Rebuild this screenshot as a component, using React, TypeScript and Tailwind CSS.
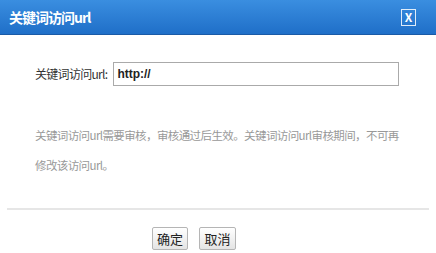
const cjk = { fontFamily: '"Noto Sans CJK SC", "Liberation Sans", sans-serif' };

export default function App() {
  return (
    <div className="w-[436px] h-[253px] bg-white overflow-hidden" style={cjk}>
      <div className="h-[35px] flex items-center justify-between pl-[9px] pr-[20px] bg-gradient-to-b from-[#3a8ee0] to-[#1f6fc8] border-b border-[#1a5aa6]">
        <span className="text-white text-[14px] font-bold tracking-[-1px]">关键词访问url</span>
        <span className="w-[15px] h-[17px] border-[1.5px] border-white/85 flex items-center justify-center text-white text-[12px] font-bold leading-none">X</span>
      </div>
      <div className="flex items-center pl-[35px] pt-[27px]">
        <span className="text-[12px] text-[#333] tracking-[-0.7px] pr-[1px]">关键词访问url:</span>
        <div className="ml-[5px] w-[286px] h-[24px] border border-[#aaa] flex items-center px-[3px] text-[12px] font-bold text-[#222]" style={{ fontFamily: '"Liberation Sans", sans-serif' }}>
          http://
        </div>
      </div>
      <div className="pl-[35px] pt-[34px] text-[11.5px] leading-[30px] text-[#999] tracking-[-0.6px] whitespace-nowrap">
        关键词访问url需要审核，审核通过后生效。关键词访问url审核期间，不可再
        <br />
        修改该访问url。
      </div>
      <div className="mt-[28px] mx-[7px] h-[2px] bg-[#e6e6e6]" />
      <div className="flex justify-center gap-[11px] pt-[17px] pr-[48px]">
        <button className="w-[36px] h-[23px] border border-[#b5b5b5] rounded-[2px] bg-gradient-to-b from-white to-[#e4e4e4] text-[13px] text-[#222]">确定</button>
        <button className="w-[37px] h-[23px] border border-[#b5b5b5] rounded-[2px] bg-gradient-to-b from-white to-[#e4e4e4] text-[13px] text-[#222]">取消</button>
      </div>
    </div>
  );
}
